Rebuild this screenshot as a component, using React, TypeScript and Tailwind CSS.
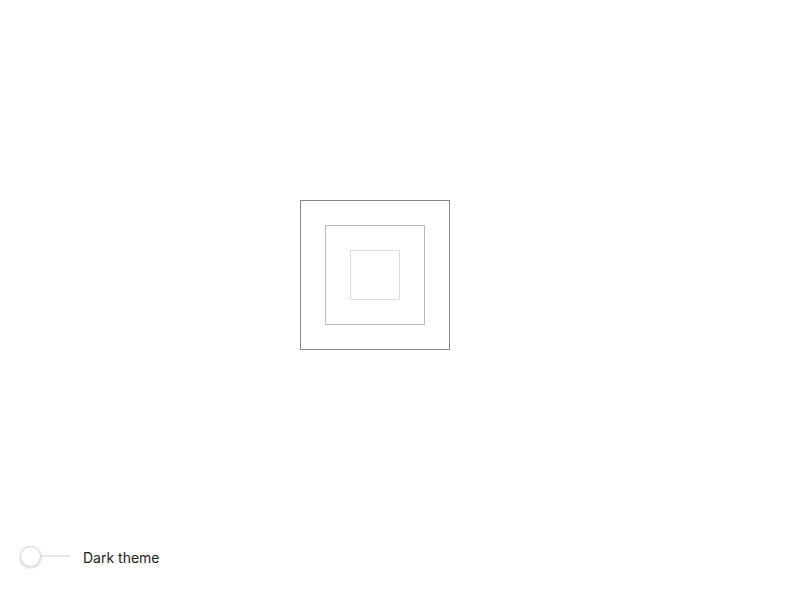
import { useState } from "react";

export default function App() {
  const [dark, setDark] = useState(false);

  return (
    <div
      className="w-[800px] h-[600px] flex flex-col bg-white"
      style={{ fontFamily: "Inter, 'Liberation Sans', sans-serif" }}
    >
      <div className="flex-1 pt-[200px] pl-[300px]">
        <div className="w-[150px] h-[150px] border border-[#888888] flex items-center justify-center">
          <div className="w-[100px] h-[100px] border border-[#bcbcbc] flex items-center justify-center">
            <div className="w-[50px] h-[50px] border border-[#dddddd]" />
          </div>
        </div>
      </div>

      <div className="flex items-center h-[24px] pl-[20px] mb-[32px]">
        <button
          className="relative w-[50px] h-[22px] flex items-center"
          onClick={() => setDark((d) => !d)}
        >
          <span className="block w-full h-[2px] bg-[#e8e8e8]" />
          <span className="absolute left-0 top-[1px] w-[21px] h-[21px] rounded-full bg-white border border-[#d8d8d8] shadow-[0_1px_3px_rgba(0,0,0,0.2)]" />
        </button>
        <span className="ml-[13px] mt-[3px] text-[14px] text-[#222222]">Dark theme</span>
      </div>
    </div>
  );
}
